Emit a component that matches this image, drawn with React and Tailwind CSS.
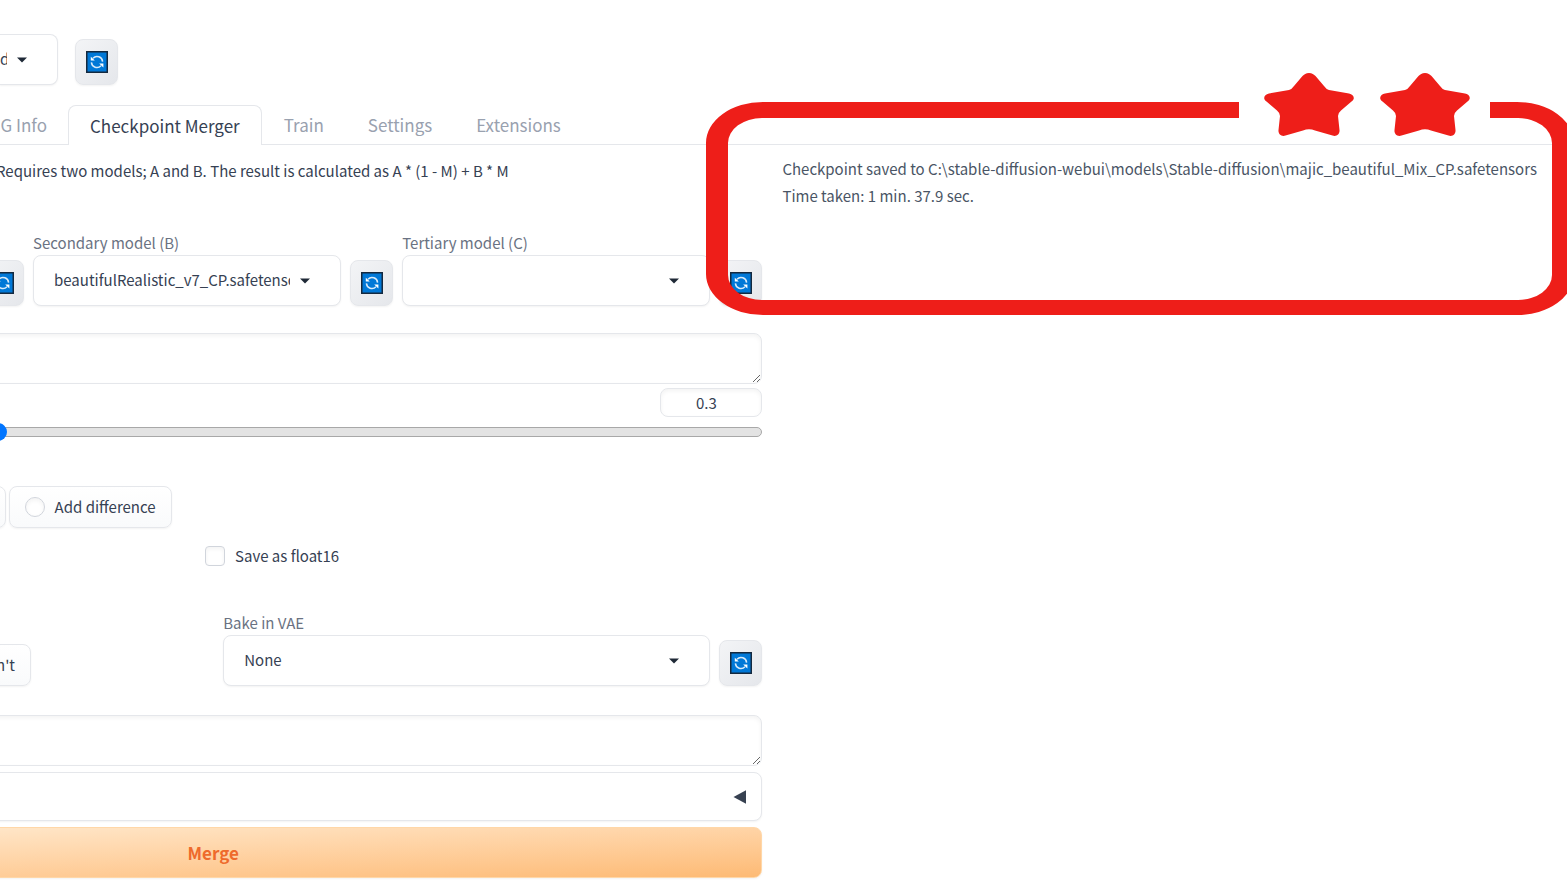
import { useState } from 'react';

const OUTER_TABS = ['Train', 'Settings', 'Extensions'];

function RefreshButton({ label }) {
  return (
    <button
      aria-label={label}
      className="flex h-[46px] w-[43px] shrink-0 items-center justify-center rounded-lg border border-gray-200 bg-linear-to-br from-gray-100 to-gray-200 shadow-xs"
    >
      <svg width="22" height="22" viewBox="0 0 22 22" fill="none" className="shrink-0">
        <rect x="0.75" y="0.75" width="20.5" height="20.5" fill="#0078d7" stroke="#14293f" strokeWidth="1.5" />
        <path d="M7 7.2A5.6 5.6 0 0 1 16.6 10.6M15 14.8A5.6 5.6 0 0 1 5.4 11.4" stroke="#d9ebfa" strokeWidth="1.5" />
        <path d="M4.8 5.8V9.6H8.8ZM17.4 16.4V12.6H13.2Z" fill="#fff" />
      </svg>
    </button>
  );
}

function Dropdown({ id, value, className = 'pl-5' }) {
  return (
    <div className="relative h-[51px] w-full">
      <select
        id={id}
        aria-label={id}
        defaultValue={value}
        className={`h-full w-full appearance-none rounded-lg border border-gray-200 bg-white pr-[50px] pb-px text-[15px] text-gray-700 shadow-xs outline-none ${className}`}
      >
        <option value={value}>{value}</option>
      </select>
      <svg className="pointer-events-none absolute top-[23px] right-[31px]" width="10" height="6" viewBox="0 0 10 6">
        <path d="M0 0.5H10L5 5.5Z" fill="#1f2937" />
      </svg>
    </div>
  );
}

function Field({ id, label, value }) {
  return (
    <div className="min-w-0 flex-1">
      <label htmlFor={id} className="block text-[15px] leading-6 text-gray-500">{label}</label>
      <Dropdown id={id} value={value} />
    </div>
  );
}

function RadioPill({ name, label }) {
  return (
    <label className="flex h-[42px] items-center gap-[10px] rounded-lg border border-gray-200 bg-linear-to-b from-white to-gray-50 px-[15px] text-[15px] whitespace-nowrap text-gray-700 shadow-xs">
      <input type="radio" name={name} className="size-5 appearance-none rounded-full border border-gray-300 bg-white shadow-inner" />
      {label}
    </label>
  );
}

const boxClass = 'block h-[51px] w-full rounded-lg border border-gray-200 bg-white shadow-[inset_0_2px_4px_0_rgba(0,0,0,0.05)] outline-none';

// Hand drawn frame with two stars over the result panel
function Highlight() {
  const star =
    'M45 0C48 0 50 1.5 51.5 3L60 13Q62 16 65 17L85 20.5C90 21.5 91.5 26 87.5 28.5L77 37.5Q74 40 74 43L75.5 57C76 61 72.5 64 68.5 62.5L51 57.5Q45 55 39 57.5L21.5 62.5C17.5 64 14 61 14.5 57L16 43Q16 40 13 37.5L2.5 28.5C-1.5 26 0 21.5 5 20.5L25 17Q28 16 30 13L38.5 3C40 1.5 42 0 45 0Z';
  return (
    <svg className="pointer-events-none absolute top-[60px] left-[700px]" width="880" height="270" viewBox="0 0 880 270" fill="#ee1e19">
      <path d="M539 42H63A57 41 0 0 0 6 83V214A57 41 0 0 0 63 255H817A57 41 0 0 0 874 214V83A57 41 0 0 0 817 42H790V58H818A34 25 0 0 1 852 83V215A34 25 0 0 1 818 240H62A34 25 0 0 1 28 215V83A34 25 0 0 1 62 58H539Z" />
      <path d={star} transform="translate(564 13)" />
      <path d={star} transform="translate(680 13)" />
    </svg>
  );
}

export default function App() {
  const [multiplier, setMultiplier] = useState(0.3);

  return (
    <div className="relative min-h-screen overflow-hidden bg-white font-['Noto_Sans_CJK_SC','Noto_Sans_CJK_JP',sans-serif] text-gray-700">
      <header className="flex items-end gap-[17px] pt-[34px]">
        <div className="w-[58px]">
          <Dropdown id="checkpoint" value="d" className="rounded-l-none border-l-0 pl-0" />
        </div>
        <RefreshButton label="Refresh checkpoints" />
      </header>

      <nav className="mt-5 flex h-10 text-[17px] leading-6 text-gray-400">
        <button className="w-[68px] border-b border-gray-200 pr-[21px] text-right whitespace-nowrap">G Info</button>
        <button className="rounded-t-lg border border-b-0 border-gray-200 px-[21px] whitespace-nowrap text-gray-700">
          Checkpoint Merger
        </button>
        {OUTER_TABS.map((tab) => (
          <button key={tab} className="border-b border-gray-200 px-[22px] whitespace-nowrap">{tab}</button>
        ))}
        <div className="flex-1 border-b border-gray-200" />
      </nav>

      <main className="-ml-[336px] grid grid-cols-[minmax(0,7fr)_minmax(0,5fr)] gap-5">
        <section>
          <p className="mt-3 pl-[332px] text-[15px] leading-[27px] whitespace-nowrap">
            Requires two models; A and B. The result is calculated as A * (1 - M) + B * M
          </p>

          <div className="mt-[47px] flex items-end gap-[9px] pl-[317px]">
            <RefreshButton label="Refresh primary model" />
            <Field id="model-b" label="Secondary model (B)" value="beautifulRealistic_v7_CP.safetensors" />
            <RefreshButton label="Refresh secondary model" />
            <Field id="model-c" label="Tertiary model (C)" value="" />
            <RefreshButton label="Refresh tertiary model" />
          </div>

          <textarea aria-label="Custom name" rows={1} className={`mt-[27px] resize-y ${boxClass}`} />

          <div className="mt-1 flex justify-end">
            <input
              type="text"
              aria-label="Multiplier value"
              value={multiplier}
              onChange={(e) => setMultiplier(e.target.value)}
              className="h-[29px] w-[102px] rounded-lg border border-gray-200 pr-[10px] text-center text-[15px] shadow-[inset_0_2px_4px_0_rgba(0,0,0,0.05)] outline-none"
            />
          </div>
          <input
            type="range"
            aria-label="Multiplier"
            min="0"
            max="1"
            step="0.05"
            value={multiplier}
            onChange={(e) => setMultiplier(e.target.value)}
            className="mt-[10px] block h-[10px] w-full appearance-none rounded-full border border-[#a8a8a8] bg-[#e3e3e3] [&::-webkit-slider-thumb]:size-[18px] [&::-webkit-slider-thumb]:appearance-none [&::-webkit-slider-thumb]:rounded-full [&::-webkit-slider-thumb]:bg-[#0075ff]"
          />

          <div className="mt-[49px] flex gap-[3px] pl-[180px]">
            <RadioPill name="method" label="Weighted sum" />
            <RadioPill name="method" label="Add difference" />
          </div>

          <label className="mt-[14px] ml-[541px] flex h-7 items-center gap-[10px] text-[15px]">
            <input type="checkbox" className="size-5 appearance-none rounded-sm border border-gray-300 shadow-inner" />
            Save as float16
          </label>

          <div className="mt-[41px] grid grid-cols-2 items-end gap-5">
            <div className="flex w-[367px] justify-end">
              <RadioPill name="config" label="Don't" />
            </div>
            <div className="flex items-end gap-[9px]">
              <Field id="vae" label="Bake in VAE" value="None" />
              <RefreshButton label="Refresh VAE" />
            </div>
          </div>

          <textarea aria-label="Discard weights" rows={1} className={`mt-[29px] resize-y ${boxClass}`} />

          <button
            aria-label="Metadata"
            className="mt-[6px] flex h-[49px] w-full items-center justify-end rounded-lg border border-gray-200 bg-white pr-[14px] shadow-xs"
          >
            <svg width="14" height="14" viewBox="0 0 14 14">
              <path d="M0.5 7L13 0.3V13.7Z" fill="#374151" />
            </svg>
          </button>

          <button className="mt-[6px] h-[51px] w-full rounded-lg border border-orange-200 bg-linear-to-br from-[#ffedd5] to-[#fdba74] text-[17px] font-bold text-[#ee6a2c] shadow-xs">
            Merge
          </button>
        </section>

        <section className="pt-[10px] text-[15px] leading-[27px] text-gray-600">
          <p className="whitespace-nowrap">
            Checkpoint saved to C:\stable-diffusion-webui\models\Stable-diffusion\majic_beautiful_Mix_CP.safetensors
          </p>
          <p>Time taken: 1 min. 37.9 sec.</p>
        </section>
      </main>

      <Highlight />
    </div>
  );
}
